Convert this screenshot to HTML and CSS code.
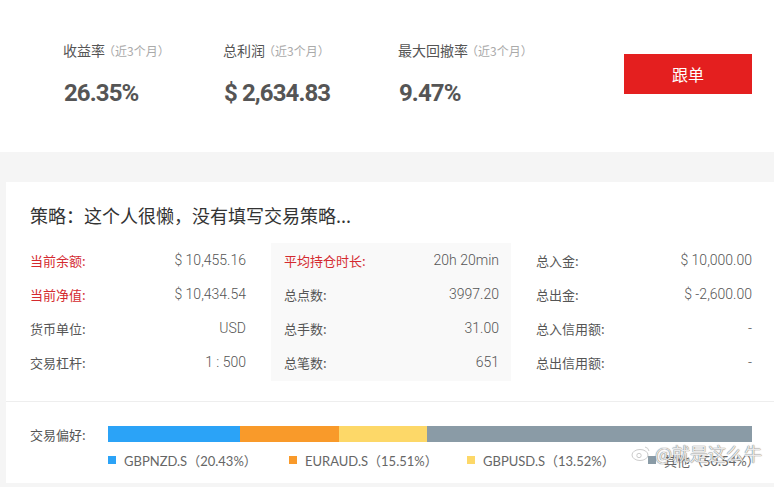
FILE: index.html
```html
<!DOCTYPE html>
<html lang="zh-CN">
<head>
<meta charset="utf-8">
<title>策略</title>
<link rel="stylesheet" href="styles.css">
</head>
<body>
<section class="top">
  <div class="stat s1">
    <div class="stat-label">收益率<span class="sub">（近3个月）</span></div>
    <div class="stat-value">26.35%</div>
  </div>
  <div class="stat s2">
    <div class="stat-label">总利润<span class="sub">（近3个月）</span></div>
    <div class="stat-value">$ 2,634.83</div>
  </div>
  <div class="stat s3">
    <div class="stat-label">最大回撤率<span class="sub">（近3个月）</span></div>
    <div class="stat-value">9.47%</div>
  </div>
  <button class="follow">跟单</button>
</section>

<section class="card">
  <div class="card-main">
    <h2 class="strategy">策略：这个人很懒，没有填写交易策略...</h2>
    <div class="table">
      <div class="col">
        <div class="row"><span class="lab red">当前余额:</span><span class="val">$ 10,455.16</span></div>
        <div class="row"><span class="lab red">当前净值:</span><span class="val">$ 10,434.54</span></div>
        <div class="row"><span class="lab">货币单位:</span><span class="val">USD</span></div>
        <div class="row"><span class="lab">交易杠杆:</span><span class="val">1 : 500</span></div>
      </div>
      <div class="col shaded">
        <div class="row"><span class="lab red">平均持仓时长:</span><span class="val">20h 20min</span></div>
        <div class="row"><span class="lab">总点数:</span><span class="val">3997.20</span></div>
        <div class="row"><span class="lab">总手数:</span><span class="val">31.00</span></div>
        <div class="row"><span class="lab">总笔数:</span><span class="val">651</span></div>
      </div>
      <div class="col">
        <div class="row"><span class="lab">总入金:</span><span class="val">$ 10,000.00</span></div>
        <div class="row"><span class="lab">总出金:</span><span class="val">$ -2,600.00</span></div>
        <div class="row"><span class="lab">总入信用额:</span><span class="val">-</span></div>
        <div class="row"><span class="lab">总出信用额:</span><span class="val">-</span></div>
      </div>
    </div>
  </div>
  <div class="pref">
    <div class="pref-row">
      <span class="pref-label">交易偏好:</span>
      <div class="bar">
        <div class="seg blue" style="width:20.43%"></div>
        <div class="seg orange" style="width:15.51%"></div>
        <div class="seg yellow" style="width:13.52%"></div>
        <div class="seg grey" style="width:50.54%"></div>
      </div>
    </div>
    <div class="legend">
      <div class="item"><i class="dot blue"></i>GBPNZD.S（20.43%）</div>
      <div class="item i2"><i class="dot orange"></i>EURAUD.S（15.51%）</div>
      <div class="item"><i class="dot yellow"></i>GBPUSD.S（13.52%）</div>
      <div class="item last"><i class="dot grey"></i>其他（50.54%）</div>
    </div>
    <div class="watermark">
      <svg class="wm-icon" width="20" height="16" viewBox="0 0 20 16"><ellipse cx="9" cy="10" rx="8" ry="5.5" fill="none" stroke="#ccc" stroke-width="1"/><circle cx="8" cy="10.5" r="2.2" fill="none" stroke="#ccc" stroke-width="1"/><path d="M14 2a5 5 0 0 1 4 4" fill="none" stroke="#ccc" stroke-width="1"/></svg>
      <span>@就是这么牛</span>
    </div>
  </div>
</section>
</body>
</html>
```

FILE: styles.css
```css
* { box-sizing: border-box; }
html, body { margin: 0; padding: 0; }
body {
  width: 774px;
  height: 487px;
  overflow: hidden;
  background: #f5f5f5;
  font-family: "Noto Sans CJK SC", "Noto Sans", sans-serif;
  color: #555;
}

.top {
  background: #fff;
  height: 152px;
  display: flex;
  align-items: flex-start;
  padding: 40px 22px 0 64px;
}
.stat { display: flex; flex-direction: column; }
.s1 { width: 160px; }
.s2 { width: 175px; }
.s3 { width: 200px; }
.stat-label {
  font-size: 14px;
  line-height: 20px;
  color: #555;
  margin-left: -1px;
}
.sub { font-size: 12px; color: #aaa; margin-left: -2px; }
.stat-value {
  margin-top: 16px;
  font-family: "Roboto", "Liberation Sans", sans-serif;
  font-weight: 700;
  font-size: 24px;
  line-height: 32px;
  color: #555;
  letter-spacing: -0.9px;
}
.follow {
  margin-left: auto;
  margin-top: 14px;
  width: 128px;
  height: 40px;
  border: 0;
  background: #e41f1f;
  color: #fff;
  font-family: "Noto Sans CJK SC", sans-serif;
  font-size: 16px;
  padding: 0;
}

.card {
  margin: 30px 0 0 6px;
  background: #fff;
  height: 301px;
  position: relative;
}
.card-main { padding: 21px 22px 20px 24px; }
.strategy {
  margin: 0;
  font-weight: 400;
  font-size: 18px;
  line-height: 24px;
  color: #333;
}
.table {
  margin-top: 16px;
  display: grid;
  grid-template-columns: 216px 240px 216px;
  column-gap: 25px;
}
.col { padding: 0; }
.col.shaded { background: #f9f9f9; padding: 0 12px 2px 13px; }
.row {
  height: 34px;
  display: flex;
  align-items: center;
  justify-content: space-between;
  font-size: 13px;
}
.lab { color: #555; }
.lab.red { color: #d42a2f; }
.val {
  font-family: "Roboto", "Liberation Sans", sans-serif;
  font-weight: 300;
  color: #555;
  font-size: 14px;
}

.pref {
  border-top: 1px solid #eee;
  padding: 24px 22px 0 24px;
  position: relative;
}
.pref-row { display: flex; align-items: center; height: 16px; }
.pref-label { width: 78px; font-size: 13px; color: #555; }
.bar { flex: 1; display: flex; height: 16px; }
.seg { height: 100%; }
.blue { background: #2ba3f7; }
.orange { background: #f99a2a; }
.yellow { background: #fdd868; }
.grey { background: #8a9ba6; }
.legend {
  display: flex;
  margin: 10px 0 0 78px;
  height: 16px;
}
.item {
  flex: 0 0 181px;
  display: flex;
  align-items: center;
  font-family: "Lato", "Noto Sans CJK SC", sans-serif;
  font-size: 13px;
  color: #666;
  white-space: nowrap;
}
.item.i2 { flex-basis: 178px; }
.item.last { flex: 0 0 auto; }
.dot { width: 8px; height: 8px; margin-right: 8px; display: inline-block; }

.watermark {
  position: absolute;
  right: 12px;
  top: 38px;
  display: flex;
  align-items: center;
  gap: 2px;
  font-size: 18px;
  color: rgba(255,255,255,0.85);
  text-shadow: 0 0 1px #777, 0 0 1px #777;
}
.wm-icon { margin-right: 2px; }
```
